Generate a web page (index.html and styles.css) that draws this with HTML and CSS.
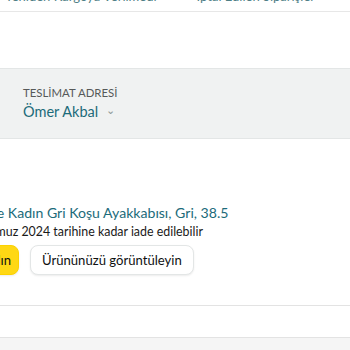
FILE: index.html
```html
<!DOCTYPE html>
<html lang="tr">
<head>
  <meta charset="UTF-8" />
  <meta name="viewport" content="width=device-width, initial-scale=1.0"/>
  <title>Siparişlerim</title>
  <link rel="stylesheet" href="styles.css">
</head>
<body>
  <nav class="tabs">
    <a class="tab">Yeniden Kargoya Verilmedi</a>
    <a class="tab">İptal Edilen Siparişler</a>
  </nav>

  <section class="address">
    <div class="address-label">TESLİMAT ADRESİ</div>
    <div class="address-name">Ömer Akbal <span class="chevron">&#8964;</span></div>
  </section>

  <section class="item">
    <a class="item-title">Nike Kadın Gri Koşu Ayakkabısı, Gri, 38.5</a>
    <p class="item-note">Temmuz 2024 tarihine kadar iade edilebilir</p>
    <div class="actions">
      <button class="btn btn-buy">Tekrar satın alın</button>
      <button class="btn">Ürününüzü görüntüleyin</button>
    </div>
  </section>

  <div class="row"></div>
  <div class="footer-band"></div>
</body>
</html>
```

FILE: styles.css
```css
body {
  margin: 0;
  padding: 0;
  background: #ffffff;
  font-family: Lato, "Open Sans", Arial, sans-serif;
  color: #0f1111;
  overflow: hidden;
}

/* обрезанные вкладки сверху */
.tabs {
  height: 11px;
  overflow: hidden;
  border-bottom: 1px solid #e7e7e7;
  display: flex;
  gap: 40px;
  padding-left: 5px;
}

.tab {
  font-size: 13px;
  line-height: 13px;
  margin-top: -10px;
  color: #4f7f86;
  white-space: nowrap;
}

.address {
  margin-top: 56px;
  background: #f0f2f2;
  border-top: 1px solid #e3e6e6;
  border-bottom: 1px solid #e3e6e6;
  padding: 17px 23px 16px;
}

.address-label {
  font-size: 11.4px;
  line-height: 14px;
  color: #565959;
}

.address-name {
  font-size: 14.5px;
  line-height: 20px;
  color: #1c6b7a;
}

.chevron {
  font-size: 11px;
  color: #8d9696;
  margin-left: 4px;
  vertical-align: 3px;
}

.item {
  margin-top: 64px;
  margin-left: -24px;
}

.item-title {
  display: block;
  font-size: 14.1px;
  line-height: 20px;
  color: #1c6b7a;
  white-space: nowrap;
}

.item-note {
  margin: 0 0 0 -3px;
  font-size: 12.4px;
  line-height: 17px;
  color: #1a1a1a;
  white-space: nowrap;
}

.actions {
  display: flex;
  gap: 11px;
  margin-top: 5px;
}

.btn {
  height: 30px;
  padding: 0 11px;
  border-radius: 8px;
  border: 1px solid #e3e6e6;
  background: #ffffff;
  font-family: inherit;
  font-size: 13.1px;
  color: #0f1111;
  box-shadow: 0 1px 2px rgba(0,0,0,0.08);
}

.btn-buy {
  background: #ffd814;
  border-color: #fcd200;
  width: 43px;
  text-align: right;
  padding-right: 7px;
  white-space: nowrap;
  overflow: hidden;
  direction: rtl;
}

.row {
  height: 30px;
  border-bottom: 1px solid #e3e3e3;
}

.footer-band {
  margin-top: 31px;
  border-top: 1px solid #e3e3e3;
  height: 20px;
  background: #f5f5f5;
}
```
